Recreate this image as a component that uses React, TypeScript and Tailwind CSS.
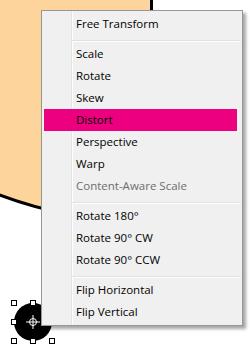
const items: (string | null)[] = [
  'Free Transform',
  null,
  'Scale',
  'Rotate',
  'Skew',
  'Distort',
  'Perspective',
  'Warp',
  'Content-Aware Scale',
  null,
  'Rotate 180°',
  'Rotate 90° CW',
  'Rotate 90° CCW',
  null,
  'Flip Horizontal',
  'Flip Vertical',
];

const ACTIVE = 'Distort';
const DISABLED = 'Content-Aware Scale';

// selection handles around the circle: [centerX, centerY]
const handles: [number, number][] = [
  [14, 303], [33, 303], [52, 303],
  [14, 322],
  [14, 341], [33, 341], [52, 341],
];

function Handle({ x, y }: { x: number; y: number }) {
  return (
    <div
      className="absolute w-[6px] h-[6px] bg-white border border-black"
      style={{ left: x - 3, top: y - 3 }}
    />
  );
}

function TransformMenu() {
  return (
    <div className="absolute left-[41px] top-[10px] w-[202px] z-10 bg-[#f0f0f0] border border-[#979797] shadow-[3px_3px_3px_rgba(0,0,0,0.35)] pl-[2px] pr-[5px] py-[2px]">
      {/* gutter line */}
      <div className="absolute left-[29px] top-0 bottom-0 w-[2px] flex">
        <div className="w-px bg-[#e2e3e3]" />
        <div className="w-px bg-white" />
      </div>
      <div className="relative flex flex-col">
        {items.map((label, i) =>
          label === null ? (
            <div key={i} className="h-[8px] pt-[5px] ml-[28px] mr-[-4px]">
              <div className="h-px bg-[#e0e0e0]" />
              <div className="h-px bg-white" />
            </div>
          ) : (
            <div
              key={i}
              className={`h-[22px] flex items-center pl-[32px] text-[11.5px] ${
                label === ACTIVE ? 'bg-[#ed0080] text-[#1a0010]' : ''
              } ${label === DISABLED ? 'text-[#6d6d6d]' : 'text-black'}`}
            >
              {label}
            </div>
          ),
        )}
      </div>
    </div>
  );
}

export default function App() {
  return (
    <div className="relative w-[251px] h-[350px] bg-white overflow-hidden font-['Open_Sans',sans-serif]">
      {/* peach shape on the canvas */}
      <div className="absolute left-[-260px] top-[-200px] w-[413px] h-[422px] bg-[#fdd59c] border-[3px] border-black rounded-bl-[400px]" />

      {/* black circle with selection */}
      <div className="absolute left-[14px] top-[303px] w-[38px] h-[38px] rounded-full bg-black" />
      {handles.map(([x, y], i) => (
        <Handle key={i} x={x} y={y} />
      ))}
      <svg className="absolute left-[25px] top-[314px]" width="16" height="16" viewBox="0 0 16 16">
        <circle cx="8" cy="8" r="3.5" fill="none" stroke="white" strokeWidth="1" />
        <line x1="8" y1="1" x2="8" y2="15" stroke="white" strokeWidth="1" />
        <line x1="1" y1="8" x2="15" y2="8" stroke="white" strokeWidth="1" />
      </svg>

      <TransformMenu />
    </div>
  );
}
